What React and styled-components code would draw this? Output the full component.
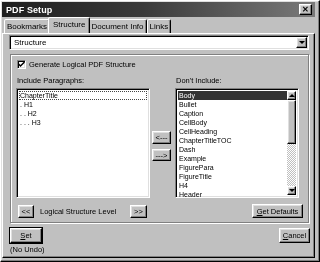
import React from "react";
import styled, { createGlobalStyle, css } from "styled-components";

const GlobalStyle = createGlobalStyle`
  * { box-sizing: border-box; }
  body {
    margin: 0;
    background: #c0c0c0;
    font-family: "Liberation Sans", Arial, sans-serif;
    font-size: 7.5px;
    color: #000;
  }
`;

const raised = css`
  background: #c0c0c0;
  border: 1px solid;
  border-color: #fff #000 #000 #fff;
  box-shadow: inset -1px -1px #808080, inset 1px 1px #dfdfdf;
`;

const sunken = css`
  background: #fff;
  border: 1px solid;
  border-color: #808080 #fff #fff #808080;
  box-shadow: inset 1px 1px #000, inset -1px -1px #dfdfdf;
`;

const Window = styled.div`
  width: 320px;
  height: 262px;
  padding: 1px 4px 3px 1px;
  display: flex;
  flex-direction: column;
  overflow: hidden;
  filter: grayscale(1);
  ${raised}
`;

const TitleBar = styled.div`
  height: 15px;
  flex: none;
  display: flex;
  align-items: center;
  justify-content: space-between;
  padding: 0 3px 0 4px;
  background: linear-gradient(90deg, #1e1e1e 0%, #3a3a3a 45%, #7a7a7a 100%);
  color: #fff;
  font-weight: bold;
  font-size: 9px;
  letter-spacing: 0.1px;
`;

const CloseBtn = styled.div`
  width: 13px;
  height: 11px;
  display: flex;
  align-items: center;
  justify-content: center;
  color: #000;
  font-size: 8px;
  line-height: 1;
  ${raised}
`;

const TabRow = styled.div`
  display: flex;
  flex: none;
  height: 14px;
  margin-top: 2px;
  padding-left: 2px;
  position: relative;
  z-index: 1;
`;

const Tab = styled.div`
  height: ${(p) => (p.$active ? "16px" : "14px")};
  margin-top: ${(p) => (p.$active ? "-2px" : "0")};
  padding: ${(p) => (p.$active ? "2px 4px 0" : "2px 2px 0")};
  background: #c0c0c0;
  border: 1px solid;
  border-bottom: none;
  border-color: #fff #000 transparent #fff;
  box-shadow: inset -1px 0 #808080;
  border-radius: 2px 2px 0 0;
  font-size: 8px;
  white-space: nowrap;
  ${(p) => p.$active && "margin-left: -2px; margin-right: -2px; z-index: 2;"}
`;

const Panel = styled.div`
  flex: 1;
  min-height: 0;
  display: flex;
  flex-direction: column;
  padding: 1px 4px 4px 6px;
  border: 1px solid;
  border-color: #fff #000 #000 #fff;
  box-shadow: inset -1px -1px #808080;
`;

const Combo = styled.div`
  height: 15px;
  flex: none;
  width: 300px;
  display: flex;
  align-items: center;
  justify-content: space-between;
  padding: 0 1px 0 4px;
  font-size: 8px;
  ${sunken}
`;

const DropBtn = styled.div`
  width: 11px;
  height: 11px;
  display: flex;
  align-items: center;
  justify-content: center;
  ${raised}
`;

const Arrow = styled.div`
  width: 0;
  height: 0;
  border-left: 3px solid transparent;
  border-right: 3px solid transparent;
  ${(p) =>
    p.$up ? "border-bottom: 3px solid #000;" : "border-top: 3px solid #000;"}
`;

const Group = styled.div`
  margin: 4px 0 0 1px;
  width: 299px;
  height: 169px;
  flex: none;
  border: 1px solid #808080;
  box-shadow: 1px 1px #fff, inset 1px 1px #fff;
  padding: 4px 5px 0 5px;
  display: flex;
  flex-direction: column;
`;

const CheckRow = styled.div`
  display: flex;
  align-items: center;
  gap: 3px;
  height: 10px;
  padding-left: 1px;
`;

const CheckBox = styled.div`
  width: 9px;
  height: 9px;
  display: flex;
  align-items: center;
  justify-content: center;
  ${sunken}
`;

const Lists = styled.div`
  display: grid;
  grid-template-columns: 134px 25px 124px;
  grid-template-rows: 13px 110px;
  margin-top: 6px;
`;

const Label = styled.div`
  padding: 1px 0 0 1px;
  grid-row: 1;
  grid-column: ${(p) => p.$col};
`;

const ListBox = styled.div`
  grid-row: 2;
  grid-column: ${(p) => p.$col};
  height: 110px;
  padding: 2px 2px;
  display: flex;
  ${sunken}
`;

const Items = styled.div`
  flex: 1;
  display: flex;
  flex-direction: column;
`;

const Item = styled.div`
  height: 9px;
  line-height: 9px;
  font-size: 7px;
  padding-left: 1px;
  white-space: pre;
  ${(p) => p.$focus && "outline: 1px dotted #444; outline-offset: -1px;"}
  ${(p) => p.$selected && "background: #333; color: #fff;"}
`;

const ScrollBar = styled.div`
  width: 9px;
  display: flex;
  flex-direction: column;
  background: repeating-conic-gradient(#c0c0c0 0 25%, #fff 0 50%) 0 0 / 2px 2px;
`;

const ScrollBtn = styled.div`
  height: 9px;
  display: flex;
  align-items: center;
  justify-content: center;
  ${raised}
`;

const Thumb = styled.div`
  height: 44px;
  ${raised}
`;

const Track = styled.div`
  flex: 1;
`;

const Middle = styled.div`
  grid-row: 2;
  grid-column: 2;
  display: flex;
  flex-direction: column;
  align-items: flex-start;
  padding: 43px 0 0 2px;
  gap: 5px;
`;

const Button = styled.div`
  height: ${(p) => p.$h || 13}px;
  width: ${(p) => p.$w}px;
  flex: none;
  display: flex;
  align-items: center;
  justify-content: center;
  white-space: nowrap;
  ${raised}
  ${(p) => p.$default && "outline: 1px solid #000;"}
`;

const LevelRow = styled.div`
  display: flex;
  align-items: center;
  margin-top: 6px;
  padding-left: 2px;
`;

const LevelText = styled.span`
  margin: 0 0 0 6px;
  width: 90px;
`;

const Spacer = styled.div`
  flex: 1;
`;

const Footer = styled.div`
  display: flex;
  justify-content: space-between;
  align-items: flex-start;
  margin-top: 5px;
  padding: 0 0 0 1px;
`;

const Stack = styled.div`
  display: flex;
  flex-direction: column;
  gap: 2px;
`;

const left = ["ChapterTitle", ". H1", ". . H2", ". . . H3"];
const right = [
  "Body",
  "Bullet",
  "Caption",
  "CellBody",
  "CellHeading",
  "ChapterTitleTOC",
  "Dash",
  "Example",
  "FigurePara",
  "FigureTitle",
  "H4",
  "Header",
];

export default function App() {
  return (
    <>
      <GlobalStyle />
      <Window>
        <TitleBar>
          <span>PDF Setup</span>
          <CloseBtn>✕</CloseBtn>
        </TitleBar>
        <TabRow>
          <Tab>Bookmarks</Tab>
          <Tab $active>Structure</Tab>
          <Tab>Document Info</Tab>
          <Tab>Links</Tab>
        </TabRow>
        <Panel>
          <Combo>
            <span>Structure</span>
            <DropBtn>
              <Arrow />
            </DropBtn>
          </Combo>
          <Group>
            <CheckRow>
              <CheckBox>
                <svg width="7" height="7" viewBox="0 0 7 7">
                  <path d="M0.5 3 L2.5 5 L6.5 1" stroke="#000" strokeWidth="1.5" fill="none" />
                </svg>
              </CheckBox>
              Generate Logical PDF Structure
            </CheckRow>
            <Lists>
              <Label $col={1}>Include Paragraphs:</Label>
              <Label $col={3}>Don't Include:</Label>
              <ListBox $col={1}>
                <Items>
                  {left.map((t, i) => (
                    <Item key={t} $focus={i === 0}>
                      {t}
                    </Item>
                  ))}
                </Items>
              </ListBox>
              <Middle>
                <Button $w={19} $h={13}>&lt;---</Button>
                <Button $w={19} $h={12}>---&gt;</Button>
              </Middle>
              <ListBox $col={3}>
                <Items>
                  {right.map((t, i) => (
                    <Item key={t} $selected={i === 0}>
                      {t}
                    </Item>
                  ))}
                </Items>
                <ScrollBar>
                  <ScrollBtn>
                    <Arrow $up />
                  </ScrollBtn>
                  <Thumb />
                  <Track />
                  <ScrollBtn>
                    <Arrow />
                  </ScrollBtn>
                </ScrollBar>
              </ListBox>
            </Lists>
            <LevelRow>
              <Button $w={16}>&lt;&lt;</Button>
              <LevelText>Logical Structure Level</LevelText>
              <Button $w={17}>&gt;&gt;</Button>
              <Spacer />
              <Button $w={51} $h={14}>
                <span>
                  <u>G</u>et Defaults
                </span>
              </Button>
            </LevelRow>
          </Group>
          <Footer>
            <Stack>
              <Button $w={32} $h={15} $default>
                <span>
                  <u>S</u>et
                </span>
              </Button>
              <span>(No Undo)</span>
            </Stack>
            <Button $w={31} $h={15}>
              <span>
                <u>C</u>ancel
              </span>
            </Button>
          </Footer>
        </Panel>
      </Window>
    </>
  );
}
